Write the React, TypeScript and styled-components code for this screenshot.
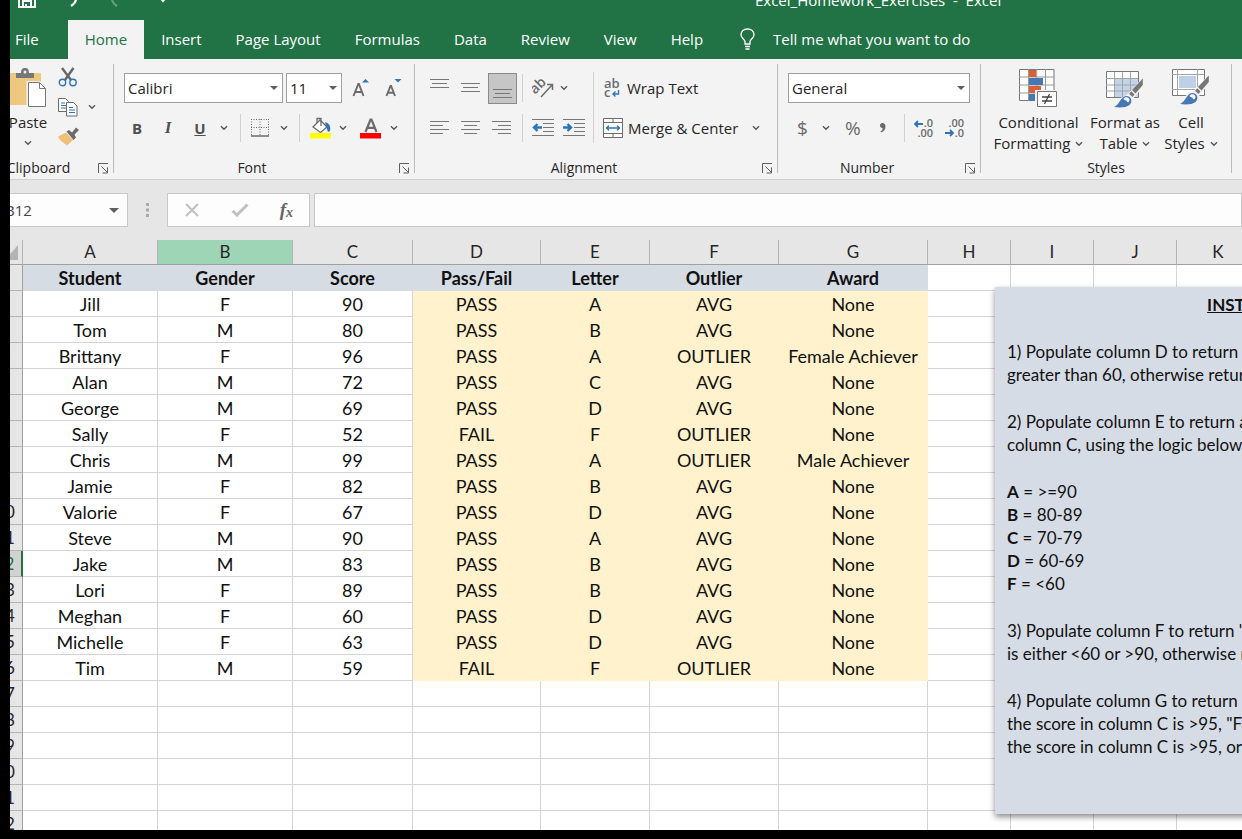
import React from 'react';
import styled, { createGlobalStyle, css } from 'styled-components';

const GREEN = '#217346';
const INK = '#262626';
const STEEL = '#6b6b6b';
const BLUE = '#2e75b6';
const UI = '"Open Sans", "Noto Sans", sans-serif';
const CELL = 'Lato, "Open Sans", sans-serif';

const Global = createGlobalStyle`
  *, *::before, *::after { box-sizing: border-box; }
  body { margin: 0; background: #000; font-family: ${UI}; font-size: 15px; color: ${INK}; }
  button, input, select { font: inherit; color: inherit; }
  button { padding: 0; border: 0; background: none; cursor: pointer; }
  svg { display: block; flex: none; }
`;

const Viewport = styled.div`
  height: 100vh;
  overflow: hidden;
  border: solid #000;
  border-width: 0 0 9px 10px;
  background: #fff;
  display: flex;
`;

const Window = styled.div`
  flex: 1;
  min-width: 0;
  margin: -20px 0 0 -22px;
  display: flex;
  flex-direction: column;
`;

const TitleBar = styled.header`
  height: 40px;
  flex: none;
  display: flex;
  align-items: center;
  background: ${GREEN};
  color: #fff;
`;

const QuickAccess = styled.div`
  flex: none;
  width: 767px;
  padding-left: 30px;
  display: grid;
  grid-template-columns: 44px 44px 52px 12px;
  align-items: center;
`;

const DocTitle = styled.h1`
  margin: 0;
  font-size: 15px;
  font-weight: 400;
  line-height: 20px;
  white-space: pre;
`;

const TabBar = styled.nav`
  height: 39px;
  flex: none;
  display: flex;
  padding-left: 10px;
  background: ${GREEN};
`;

const Tab = styled.button<{ $active?: boolean }>`
  padding: 0 17px 2px;
  white-space: nowrap;
  color: ${p => (p.$active ? GREEN : '#fff')};
  background: ${p => (p.$active ? '#f3f3f3' : 'transparent')};
  margin-left: ${p => (p.$active ? '12px' : '0')};
`;

const TellMe = styled.button`
  display: flex;
  align-items: center;
  gap: 18px;
  padding: 0 0 2px 20px;
  color: #fff;
`;

const Ribbon = styled.section`
  height: 121px;
  flex: none;
  display: flex;
  padding: 5px 0 6px;
  background: #f3f3f3;
  border-bottom: 1px solid #d0d0d0;
`;

const GroupBox = styled.section<{ $width: number }>`
  flex: none;
  width: ${p => p.$width}px;
  border-right: 1px solid #bdbdbd;
  display: flex;
  flex-direction: column;
`;

const GroupBody = styled.div<{ $left: number }>`
  flex: 1;
  padding-left: ${p => p.$left}px;
  display: flex;
`;

const GroupFooter = styled.div`
  height: 16px;
  margin-bottom: -3px;
  display: flex;
  align-items: center;
`;

const GroupName = styled.h2`
  flex: 1;
  margin: 0;
  font-size: 14px;
  font-weight: 400;
  line-height: 16px;
  text-align: center;
`;

const Launcher = styled.button`
  width: 24px;
  padding-left: 8px;
`;

const ToolRows = styled.div`
  display: grid;
  grid-template-rows: 48px 32px;
  align-content: start;
`;

const Tools = styled.div<{ $tracks: string; $indent?: number }>`
  display: grid;
  grid-template-columns: ${p => p.$tracks};
  padding-left: ${p => p.$indent ?? 0}px;
  align-items: center;
  justify-items: start;
`;

const Tool = styled.button<{ $pressed?: boolean }>`
  display: flex;
  align-items: center;
  ${p =>
    p.$pressed &&
    css`
      width: 29px;
      height: 31px;
      justify-content: center;
      align-items: flex-end;
      padding-bottom: 4px;
      background: #c6c6c6;
      border: 1px solid #8a8a8a;
    `}
`;

const LetterTool = styled(Tool)<{ $look: 'bold' | 'italic' | 'underline' }>`
  width: 12px;
  justify-content: center;
  font-size: 15px;
  font-weight: 700;
  color: #505050;
  ${p => p.$look === 'italic' && css`font-family: "Liberation Serif", serif; font-size: 17px; font-style: italic;`}
  ${p => p.$look === 'underline' && css`text-decoration: underline;`}
`;

const SymbolTool = styled(Tool)`
  font-size: 19px;
  line-height: 24px;
  color: ${STEEL};
`;

const LabelTool = styled(Tool)`
  gap: 5px;
  white-space: nowrap;
`;

const Rule = styled.span<{ $tall?: boolean }>`
  width: 1px;
  height: ${p => (p.$tall ? '71px' : '28px')};
  margin-top: ${p => (p.$tall ? '8px' : '0')};
  background: #d0d0d0;
`;

const PickerBox = styled.span<{ $width: number }>`
  position: relative;
  width: ${p => p.$width}px;
  select {
    appearance: none;
    display: block;
    width: 100%;
    height: 30px;
    padding: 0 0 0 3px;
    border: 1px solid #a0a0a0;
    border-radius: 0;
    background: #fff;
  }
  svg {
    position: absolute;
    right: 5px;
    top: 13px;
    pointer-events: none;
  }
`;

const BigTool = styled.button`
  display: flex;
  flex-direction: column;
  align-items: center;
  line-height: 21px;
  white-space: nowrap;
  svg { margin-bottom: 4px; }
`;

const BigToolLine = styled.span`
  display: flex;
  align-items: center;
  gap: 5px;
  svg { margin: 0; }
`;

const StyleTools = styled.div`
  display: grid;
  grid-template-columns: 95px 78px 54px;
  justify-items: center;
  padding-top: 4px;
`;

const PasteTool = styled(BigTool)`
  padding: 4px 0 0;
  width: 40px;
  justify-content: flex-start;
  span + svg { margin-top: 7px; }
`;

const ClipTools = styled.div`
  display: grid;
  grid-template-rows: 26px 34px 25px;
  padding-left: 10px;
  align-items: center;
`;

const FormulaBar = styled.section`
  height: 60px;
  flex: none;
  display: flex;
  padding-top: 13px;
  background: #e6e6e6;
`;

const Field = styled.div<{ $width?: number }>`
  ${p => (p.$width ? css`flex: none; width: ${p.$width}px;` : css`flex: 1;`)}
  height: 34px;
  display: flex;
  align-items: center;
  background: #fdfdfd;
  border: 1px solid #c8c8c8;
  input {
    flex: 1;
    min-width: 0;
    padding: 0 0 0 16px;
    border: 0;
    background: none;
    color: #444;
    outline: none;
  }
`;

const NameArrow = styled.button`
  padding-right: 8px;
`;

const Grip = styled.span`
  width: 39px;
  height: 34px;
  display: grid;
  place-items: center;
`;

const EntryTools = styled(Field)`
  margin-right: 4px;
  justify-content: space-between;
  padding: 0 16px;
`;

const Sheet = styled.main`
  flex: 1;
  min-height: 0;
  position: relative;
  overflow: hidden;
  font-family: ${CELL};
  font-size: 18px;
  color: #111;
`;

const Grid = styled.table`
  table-layout: fixed;
  width: 1272px;
  border-collapse: separate;
  border-spacing: 0;
  line-height: 20px;
`;

const ColHead = styled.th<{ $selected?: boolean }>`
  height: 25px;
  padding: 0;
  font-weight: 400;
  font-size: 17px;
  color: ${INK};
  background: ${p => (p.$selected ? '#9fd5b7' : '#e6e6e6')};
  border-right: 1px solid #b4b4b4;
  border-bottom: 1px solid #a0a0a0;
`;

const Corner = styled(ColHead)`
  svg { margin-left: auto; margin-right: 4px; }
`;

const RowHead = styled.th<{ $selected?: boolean }>`
  height: 26px;
  padding: 0;
  font-weight: 400;
  font-size: 17px;
  color: ${p => (p.$selected ? GREEN : INK)};
  background: ${p => (p.$selected ? '#d2d2d2' : '#e6e6e6')};
  border-right: ${p => (p.$selected ? `2px solid ${GREEN}` : '1px solid #a0a0a0')};
  border-bottom: 1px solid #b4b4b4;
`;

const fills = { plain: '#fff', title: '#d6dce4', result: '#fff2cc' };

const Cell = styled.td<{ $fill: keyof typeof fills }>`
  height: 26px;
  padding: 1px 0 0;
  text-align: center;
  white-space: nowrap;
  font-weight: ${p => (p.$fill === 'title' ? 700 : 400)};
  background: ${p => fills[p.$fill]};
  border: solid ${p => (p.$fill === 'plain' ? '#d4d4d4' : fills[p.$fill])};
  border-width: 0 1px 1px 0;
`;

const Note = styled.aside`
  position: absolute;
  left: 1007px;
  top: 47px;
  width: 548px;
  height: 527px;
  padding: 6px 12px;
  background: #d6dce5;
  box-shadow: 0 3px 6px rgba(0, 0, 0, 0.45);
  font-size: 17px;
  line-height: 23px;
  white-space: nowrap;
  h3 {
    margin: 0;
    font-size: 17px;
    text-align: center;
    text-decoration: underline;
  }
  p { margin: 24px 0 0; }
`;

/* ---------- icons ---------- */

const Chevron = () => (
  <svg width="8" height="6" viewBox="0 0 8 6" fill="none" stroke="#555" strokeWidth="1.4">
    <path d="M1 1.2 4 4.2 7 1.2" />
  </svg>
);

const Arrow = ({ size = 8 }: { size?: number }) => (
  <svg width={size} height={size / 2} viewBox="0 0 8 4" fill="#5f5f5f">
    <path d="M0 0h8L4 4z" />
  </svg>
);

const LauncherIcon = () => (
  <svg width="12" height="11" viewBox="0 0 12 11" fill="none" stroke="#5f5f5f">
    <path d="M1.5 10V.5H11M4.5 3.5l6 6M10.5 4.5v5.500H5.500" />
  </svg>
);

const SaveIcon = () => (
  <svg width="18" height="15" viewBox="0 0 18 15" fill="none" stroke="#fff" strokeWidth="2">
    <path d="M1 1h14l2 2v11H1zM5 14V8h8v6M8 14v-3" />
  </svg>
);

const TurnIcon = ({ back }: { back?: boolean }) => (
  <svg width="20" height="14" viewBox="0 0 20 14" fill="none" stroke="#fff" strokeWidth="2.2" opacity={back ? 1 : 0.3}>
    {back ? <path d="M3 0v4h7M3 4c4-4 11-3 11 2 0 3-2 5-5 7" /> : <path d="M17 0v4h-7M17 4C13 0 6 1 6 6c0 3 2 5 5 7" />}
  </svg>
);

const CustomizeIcon = () => (
  <svg width="10" height="6" viewBox="0 0 10 6" fill="#fff">
    <path d="M1 1h8L5 5.500z" />
  </svg>
);

const BulbIcon = () => (
  <svg width="15" height="22" viewBox="0 0 15 22" fill="none" stroke="#fff" strokeWidth="1.3">
    <path d="M5 16v-2.500C4.500 11 1 10 1 6.800 1 3.200 3.800 1 7.500 1S14 3.200 14 6.800c0 3.200-3.500 4.200-4 6.700V16zM5 18.500h5M5.500 21h4" />
  </svg>
);

const PasteIcon = () => (
  <svg width="38" height="40" viewBox="0 0 38 40">
    <path d="M1 5h31v32H1z" fill="#eec87f" />
    <path d="M7 10V5h5c0-3 1-5 4-5s4 2 4 5h5v5z" fill="#777" />
    <circle cx="16" cy="4" r="1.5" fill="#f3f3f3" />
    <path d="M17.500 13h13.500l7 7v20h-20.500z" fill="#f3f3f3" />
    <path d="M19.500 14.500h11l6 6v18h-17z" fill="#fff" stroke="#777" />
    <path d="M30.500 14.500v6h6" fill="none" stroke="#777" />
  </svg>
);

const CutIcon = () => (
  <svg width="20" height="20" viewBox="0 0 20 20" fill="none">
    <path d="M4 1l9 12M15.500 1 7 13" stroke="#666" strokeWidth="2.4" />
    <circle cx="4.500" cy="15.500" r="3.200" stroke={BLUE} strokeWidth="1.400" />
    <circle cx="15" cy="15.500" r="3.200" stroke={BLUE} strokeWidth="1.400" />
  </svg>
);

const CopyIcon = () => (
  <svg width="20" height="19" viewBox="0 0 20 19" fill="#fff" stroke="#6b6b6b">
    <path d="M.5.500h7l3 3v10H.5z" />
    <path d="M3 5h4M3 7.500h5M3 10h5" stroke={BLUE} />
    <path d="M8.500 4.500h7l3.500 3.500v10H8.500z" />
    <path d="M11 9.500h4M11 12h6M11 14.500h6" stroke={BLUE} />
  </svg>
);

const BrushIcon = () => (
  <svg width="21" height="19" viewBox="0 0 21 19">
    <path d="M8 5.500 15 13l-6 5.500C6 16 2 14 0 9.500z" fill="#eec07a" />
    <path d="M8.500 4.500 11 3l3 2.500L18 .5l3 2.500-4.500 4.500 1.500 3-2.500 2.500z" fill="#6b6b6b" />
  </svg>
);

const GrowIcon = ({ down }: { down?: boolean }) => (
  <svg width="17" height="20" viewBox="0 0 17 20" fill="none">
    {down ? (
      <>
        <path d="M1.500 18 5.500 8h.6L10 18M3 14.800h6" stroke={STEEL} strokeWidth="1.900" />
        <path d="M9.500 1h7L13 4.500z" fill={BLUE} />
      </>
    ) : (
      <>
        <path d="M1.500 18 6.300 6h.6L11.500 18M3.200 14h6.600" stroke={STEEL} strokeWidth="1.900" />
        <path d="M10 4.500h7L13.500 1z" fill={BLUE} />
      </>
    )}
  </svg>
);

const BordersIcon = () => (
  <svg width="18" height="18" viewBox="0 0 18 18" fill="none" stroke="#6b6b6b">
    <path d="M0 .5h18M0 8.500h18M.5 0v16M9 0v16M17.500 0v16" strokeDasharray="1 1.500" />
    <path d="M0 17h18" strokeWidth="1.500" />
  </svg>
);

const FillIcon = () => (
  <svg width="22" height="22" viewBox="0 0 22 22" fill="none">
    <path d="M3 10 10 3l7 7-6.500 5.500z" fill="#fff" stroke={STEEL} strokeWidth="1.300" />
    <path d="M7 6V1.500h4V9" stroke={STEEL} strokeWidth="1.300" />
    <path d="M15 5c4 1 6 4 5 9l-2 1-2-6z" fill={BLUE} />
    <path d="M0 16h21v5.500H0z" fill="#ff0" />
  </svg>
);

const FontColorIcon = () => (
  <svg width="22" height="22" viewBox="0 0 22 22" fill="none">
    <path d="M5.500 15 10.500 2.500h1L16.500 15M7.500 10.800h7" stroke={STEEL} strokeWidth="2.200" />
    <path d="M0 16h21v5.500H0z" fill="#f00" />
  </svg>
);

const LinesIcon = ({ rows, height = 16 }: { rows: [number, number][]; height?: number }) => (
  <svg width="19" height={height} viewBox={`0 0 19 ${height}`} stroke="#777" fill="none">
    {rows.map(([x1, x2], i) => (
      <path key={i} d={`M${x1} ${i * 4 + 1.5}H${x2}`} />
    ))}
  </svg>
);

const WIDE: [number, number] = [0, 19];
const MID: [number, number] = [2, 17];

const IndentIcon = ({ out }: { out?: boolean }) => (
  <svg width="22" height="18" viewBox="0 0 22 18" fill="none" stroke="#777">
    <path d="M0 .5h22M11 4.500h11M11 8.500h11M11 12.500h11M0 16.500h22" />
    <path d={out ? 'M10 8.500H2M5.500 5 2 8.500 5.500 12' : 'M0 8.500h8M4.500 5 8 8.500 4.500 12'} stroke={BLUE} strokeWidth="2.4" />
  </svg>
);

const OrientIcon = () => (
  <svg width="22" height="20" viewBox="0 0 22 20" fill="none" stroke={STEEL} strokeWidth="1.5">
    <g transform="rotate(-45 8 9)">
      <text x="-1" y="11" fontSize="14" fontWeight="600" fill={STEEL} stroke="none" fontFamily="Open Sans, sans-serif">ab</text>
    </g>
    <path d="M9 19 20 7M15 6.500h5.500V12" />
  </svg>
);

const WrapIcon = () => (
  <svg width="19" height="22" viewBox="0 0 19 22" fill={STEEL}>
    <text x="1" y="11" fontSize="13" fontWeight="600" fontFamily="Open Sans, sans-serif">ab</text>
    <text x="1" y="20" fontSize="13" fontWeight="600" fontFamily="Open Sans, sans-serif">c</text>
    <path d="M15.500 13v4H10M12.500 14.500 10 17l2.500 2.500" fill="none" stroke={BLUE} strokeWidth="1.400" />
  </svg>
);

const MergeIcon = () => (
  <svg width="20" height="20" viewBox="0 0 20 20" fill="#fff" stroke={STEEL}>
    <path d="M.5.500h19v19H.5z" />
    <path d="M0 4.500h20M0 15.500h20M10 0v4.500M10 15.500V20" />
    <path d="M3 10h14M6 7.500 3.500 10 6 12.500M14 7.500l2.500 2.500L14 12.500" fill="none" stroke={BLUE} strokeWidth="1.300" />
  </svg>
);

const DecimalIcon = ({ less }: { less?: boolean }) => (
  <svg width="20" height="19" viewBox="0 0 20 19" fill={STEEL} fontSize="11" fontFamily="Open Sans, sans-serif" fontWeight="600">
    <text x="19" y="8" textAnchor="end">{less ? '.00' : '.0'}</text>
    <text x="19" y="18" textAnchor="end">{less ? '.0' : '.00'}</text>
    <path d={less ? 'M0 14h8M5 11l3 3-3 3' : 'M9 5H1M4 2 1 5l3 3'} fill="none" stroke={BLUE} strokeWidth="1.800" />
  </svg>
);

const CommaIcon = () => (
  <svg width="8" height="10" viewBox="0 0 8 10" fill={STEEL}>
    <path d="M3.500 0C1.800 0 1 1 1 2.500S2 5 3.500 5c.300 1.500-.5 2.500-2 3.500L2 9.500C5 8.500 6.500 6.500 6.500 3.500 6.500 1.300 5.300 0 3.500 0z" />
  </svg>
);

const ConditionalIcon = () => (
  <svg width="40" height="40" viewBox="0 0 40 40">
    <path d="M1.500 1.500h34.500v31H1.500z" fill="#fff" stroke="#777" />
    <path d="M1 9h35M1 17h35M1 25h35M10.500 1v32M18.700 1v32M27.500 1v32" stroke="#999" fill="none" />
    <path d="M11 2h7v7h-7zM11 18h12v7H11z" fill="#d9603b" />
    <path d="M11 10h14v7H11zM11 26h6v7h-6z" fill="#4679b4" />
    <path d="M17 22h23v18H17z" fill="#f3f3f3" />
    <path d="M19.500 23.500h19v15h-19z" fill="#fff" stroke="#777" />
    <path d="M24 29h10M24 33h10M31.500 26l-5 10" stroke="#444" strokeWidth="1.300" fill="none" />
  </svg>
);

const PaintBrush = () => (
  <>
    <path d="M38.500 9v9L31 27.500 28 31l-5 8.500H7.500l8-9.500 6-3 4-4z" fill="#f3f3f3" />
    <path d="M37.800 10.500V17L30.500 25.500 27 22z" fill="#777" />
    <path d="M26.300 23.300 29.500 26.500 27.500 29 24 25.800z" fill="#777" />
    <path d="M9 39c4-2 5-5 7.500-8 2-3 5.500-4 8-2s2.500 5.500 0 8C21.500 39.500 15 40 9 39z" fill="#4679b4" />
    <path d="M18.500 31c1-2 3.500-2.500 5-1s1.200 3.500-.5 4.500c-1-.5-1.200-1-1.500-2-1 0-2-.5-3-1.500z" fill="#fff" />
  </>
);

const FormatTableIcon = () => (
  <svg width="40" height="40" viewBox="0 0 40 40">
    <path d="M1.500 3.500h32v26h-32z" fill="#fff" stroke="#777" />
    <path d="M10 11h23v18H10z" fill="#c3d3e8" />
    <path d="M1 10.500h32M1 17h32M1 23h32M9.500 4v25M17.500 4v25M25.500 4v25" stroke="#a4a4a4" fill="none" />
    <PaintBrush />
  </svg>
);

const CellStylesIcon = () => (
  <svg width="40" height="40" viewBox="0 0 40 40">
    <path d="M1.500 1.500h32v26h-32z" fill="#fff" stroke="#777" />
    <path d="M1 6.500h32M1 21.500h32M6.500 1v26M26.500 1v26" stroke="#a4a4a4" fill="none" />
    <path d="M8 8h17v12H8z" fill="#bed0e8" />
    <g transform="translate(0 -3)"><PaintBrush /></g>
  </svg>
);

const CancelIcon = () => (
  <svg width="16" height="14" viewBox="0 0 16 14" stroke="#c0c0c0" strokeWidth="2" fill="none">
    <path d="M2 1l12 12M14 1 2 13" />
  </svg>
);

const CheckIcon = () => (
  <svg width="18" height="14" viewBox="0 0 18 14" stroke="#c0c0c0" strokeWidth="3" fill="none">
    <path d="M1.500 8 6 12 16.500 1.500" />
  </svg>
);

const FxMark = styled.button`
  font: italic 700 19px/20px "Liberation Serif", serif;
  color: #666;
  sub { font-size: 14px; line-height: 14px; vertical-align: -1px; }
`;

const GripIcon = () => (
  <svg width="3" height="14" viewBox="0 0 3 14" fill="#aaa">
    <path d="M0 0h3v3H0zM0 5.500h3v3H0zM0 11h3v3H0z" />
  </svg>
);

/* ---------- data ---------- */

const tabs = ['File', 'Home', 'Insert', 'Page Layout', 'Formulas', 'Data', 'Review', 'View', 'Help'];

const columns: [string, number][] = [
  ['A', 135], ['B', 135], ['C', 120], ['D', 128], ['E', 109], ['F', 129],
  ['G', 149], ['H', 83], ['I', 83], ['J', 83], ['K', 83],
];

const rows: string[][] = [
  ['Student', 'Gender', 'Score', 'Pass/Fail', 'Letter', 'Outlier', 'Award'],
  ['Jill', 'F', '90', 'PASS', 'A', 'AVG', 'None'],
  ['Tom', 'M', '80', 'PASS', 'B', 'AVG', 'None'],
  ['Brittany', 'F', '96', 'PASS', 'A', 'OUTLIER', 'Female Achiever'],
  ['Alan', 'M', '72', 'PASS', 'C', 'AVG', 'None'],
  ['George', 'M', '69', 'PASS', 'D', 'AVG', 'None'],
  ['Sally', 'F', '52', 'FAIL', 'F', 'OUTLIER', 'None'],
  ['Chris', 'M', '99', 'PASS', 'A', 'OUTLIER', 'Male Achiever'],
  ['Jamie', 'F', '82', 'PASS', 'B', 'AVG', 'None'],
  ['Valorie', 'F', '67', 'PASS', 'D', 'AVG', 'None'],
  ['Steve', 'M', '90', 'PASS', 'A', 'AVG', 'None'],
  ['Jake', 'M', '83', 'PASS', 'B', 'AVG', 'None'],
  ['Lori', 'F', '89', 'PASS', 'B', 'AVG', 'None'],
  ['Meghan', 'F', '60', 'PASS', 'D', 'AVG', 'None'],
  ['Michelle', 'F', '63', 'PASS', 'D', 'AVG', 'None'],
  ['Tim', 'M', '59', 'FAIL', 'F', 'OUTLIER', 'None'],
];

const ROW_COUNT = 22;

const fillOf = (row: number, col: number): keyof typeof fills => {
  if (row >= rows.length || col > 6) return 'plain';
  if (row === 0) return 'title';
  return col > 2 ? 'result' : 'plain';
};

const grades = [['A', '>=90'], ['B', '80-89'], ['C', '70-79'], ['D', '60-69'], ['F', '<60']];

/* ---------- parts ---------- */

const Group = ({ name, width, left, launcher = true, children }: {
  name: string; width: number; left: number; launcher?: boolean; children: React.ReactNode;
}) => (
  <GroupBox $width={width}>
    <GroupBody $left={left}>{children}</GroupBody>
    <GroupFooter>
      <GroupName>{name}</GroupName>
      {launcher && <Launcher aria-label={`${name} settings`}><LauncherIcon /></Launcher>}
    </GroupFooter>
  </GroupBox>
);

const Picker = ({ label, value, width }: { label: string; value: string; width: number }) => (
  <PickerBox $width={width}>
    <select aria-label={label} defaultValue={value}><option>{value}</option></select>
    <Arrow />
  </PickerBox>
);

const More = ({ label }: { label: string }) => <Tool aria-label={label}><Chevron /></Tool>;

const Big = ({ icon, lines }: { icon: React.ReactNode; lines: [string, string] }) => (
  <BigTool>
    {icon}
    <span>{lines[0]}</span>
    <BigToolLine>{lines[1]}<Chevron /></BigToolLine>
  </BigTool>
);

export default function App() {
  return (
    <Viewport>
      <Global />
      <Window>
        <TitleBar>
          <QuickAccess>
            <Tool aria-label="Save"><SaveIcon /></Tool>
            <Tool aria-label="Undo"><TurnIcon back /></Tool>
            <Tool aria-label="Redo"><TurnIcon /></Tool>
            <Tool aria-label="Customize toolbar"><CustomizeIcon /></Tool>
          </QuickAccess>
          <DocTitle>Excel_Homework_Exercises  -  Excel</DocTitle>
        </TitleBar>

        <TabBar>
          {tabs.map(t => <Tab key={t} $active={t === 'Home'}>{t}</Tab>)}
          <TellMe><BulbIcon />Tell me what you want to do</TellMe>
        </TabBar>

        <Ribbon>
          <Group name="Clipboard" width={126} left={20}>
            <PasteTool>
              <PasteIcon />
              <span>Paste</span>
              <Chevron />
            </PasteTool>
            <ClipTools>
              <Tool aria-label="Cut"><CutIcon /></Tool>
              <Tools $tracks="30px 8px">
                <Tool aria-label="Copy"><CopyIcon /></Tool>
                <More label="Copy options" />
              </Tools>
              <Tool aria-label="Format painter"><BrushIcon /></Tool>
            </ClipTools>
          </Group>

          <Group name="Font" width={301} left={10}>
            <ToolRows>
              <Tools $tracks="162px 66px 33px 20px">
                <Picker label="Font family" value="Calibri" width={159} />
                <Picker label="Font size" value="11" width={56} />
                <Tool aria-label="Increase font size"><GrowIcon /></Tool>
                <Tool aria-label="Decrease font size"><GrowIcon down /></Tool>
              </Tools>
              <Tools $indent={7} $tracks="31px 32px 26px 20px 11px 29px 19px 11px 29px 21px 30px 8px">
                <LetterTool $look="bold">B</LetterTool>
                <LetterTool $look="italic">I</LetterTool>
                <LetterTool $look="underline">U</LetterTool>
                <More label="Underline options" />
                <Rule />
                <Tool aria-label="Borders"><BordersIcon /></Tool>
                <More label="Border options" />
                <Rule />
                <Tool aria-label="Fill color"><FillIcon /></Tool>
                <More label="Fill color options" />
                <Tool aria-label="Font color"><FontColorIcon /></Tool>
                <More label="Font color options" />
              </Tools>
            </ToolRows>
          </Group>

          <Group name="Alignment" width={363} left={15}>
            <ToolRows>
              <Tools $tracks="31px 27px 34px 10px 28px 33px">
                <Tool aria-label="Top align"><LinesIcon rows={[WIDE, MID, WIDE]} height={20} /></Tool>
                <Tool aria-label="Middle align"><LinesIcon rows={[WIDE, MID, WIDE]} height={12} /></Tool>
                <Tool aria-label="Bottom align" $pressed><LinesIcon rows={[WIDE, MID, WIDE]} height={11} /></Tool>
                <Rule />
                <Tool aria-label="Orientation"><OrientIcon /></Tool>
                <More label="Orientation options" />
              </Tools>
              <Tools $tracks="31px 31px 30px 10px 31px 30px">
                <Tool aria-label="Align left"><LinesIcon rows={[WIDE, [0, 13], WIDE, [0, 13]]} /></Tool>
                <Tool aria-label="Center"><LinesIcon rows={[WIDE, [3, 16], WIDE, [3, 16]]} /></Tool>
                <Tool aria-label="Align right"><LinesIcon rows={[WIDE, [6, 19], WIDE, [6, 19]]} /></Tool>
                <Rule />
                <Tool aria-label="Decrease indent"><IndentIcon out /></Tool>
                <Tool aria-label="Increase indent"><IndentIcon /></Tool>
              </Tools>
            </ToolRows>
            <Rule $tall />
            <ToolRows>
              <Tools $indent={9} $tracks="150px 8px">
                <LabelTool><WrapIcon />Wrap Text</LabelTool>
              </Tools>
              <Tools $indent={9} $tracks="149px 8px">
                <LabelTool><MergeIcon />Merge &amp; Center</LabelTool>
                <More label="Merge options" />
              </Tools>
            </ToolRows>
          </Group>

          <Group name="Number" width={203} left={10}>
            <ToolRows>
              <Tools $tracks="182px">
                <Picker label="Number format" value="General" width={182} />
              </Tools>
              <Tools $indent={9} $tracks="25px 23px 34px 25px 10px 31px 20px">
                <SymbolTool aria-label="Accounting format">$</SymbolTool>
                <More label="Accounting options" />
                <SymbolTool aria-label="Percent style">%</SymbolTool>
                <Tool aria-label="Comma style"><CommaIcon /></Tool>
                <Rule />
                <Tool aria-label="Increase decimal"><DecimalIcon /></Tool>
                <Tool aria-label="Decrease decimal"><DecimalIcon less /></Tool>
              </Tools>
            </ToolRows>
          </Group>

          <Group name="Styles" width={251} left={10} launcher={false}>
            <StyleTools>
              <Big icon={<ConditionalIcon />} lines={['Conditional', 'Formatting']} />
              <Big icon={<FormatTableIcon />} lines={['Format as', 'Table']} />
              <Big icon={<CellStylesIcon />} lines={['Cell', 'Styles']} />
            </StyleTools>
          </Group>
        </Ribbon>

        <FormulaBar>
          <Field $width={140}>
            <input aria-label="Name box" defaultValue="B12" />
            <NameArrow aria-label="Names"><Arrow size={10} /></NameArrow>
          </Field>
          <Grip><GripIcon /></Grip>
          <EntryTools $width={143}>
            <Tool aria-label="Cancel"><CancelIcon /></Tool>
            <Tool aria-label="Enter"><CheckIcon /></Tool>
            <FxMark aria-label="Insert function">f<sub>x</sub></FxMark>
          </EntryTools>
          <Field><input aria-label="Formula" /></Field>
        </FormulaBar>

        <Sheet>
          <Grid>
            <colgroup>
              <col width={35} />
              {columns.map(([name, width]) => <col key={name} width={width} />)}
            </colgroup>
            <thead>
              <tr>
                <Corner aria-label="Select all">
                  <svg width="13" height="15" viewBox="0 0 13 15" fill="#b4b4b4"><path d="M13 0v15H0z" /></svg>
                </Corner>
                {columns.map(([name]) => <ColHead key={name} scope="col" $selected={name === 'B'}>{name}</ColHead>)}
              </tr>
            </thead>
            <tbody>
              {Array.from({ length: ROW_COUNT }, (_, r) => (
                <tr key={r}>
                  <RowHead scope="row" $selected={r === 11}>{r + 1}</RowHead>
                  {columns.map(([name], c) => (
                    <Cell key={name} $fill={fillOf(r, c)}>{rows[r]?.[c]}</Cell>
                  ))}
                </tr>
              ))}
            </tbody>
          </Grid>
          <Note>
            <h3>INSTRUCTIONS</h3>
            <p>1) Populate column D to return "PASS" if the score is<br />greater than 60, otherwise return "FAIL"</p>
            <p>2) Populate column E to return a letter grade based on<br />column C, using the logic below:</p>
            <p>{grades.map(([g, range]) => <React.Fragment key={g}><b>{g}</b> = {range}<br /></React.Fragment>)}</p>
            <p>3) Populate column F to return "OUTLIER" if the score<br />is either &lt;60 or &gt;90, otherwise return "AVG"</p>
            <p>4) Populate column G to return "Male Achiever" if<br />the score in column C is &gt;95, "Female Achiever" if<br />the score in column C is &gt;95, or "None"</p>
          </Note>
        </Sheet>
      </Window>
    </Viewport>
  );
}
